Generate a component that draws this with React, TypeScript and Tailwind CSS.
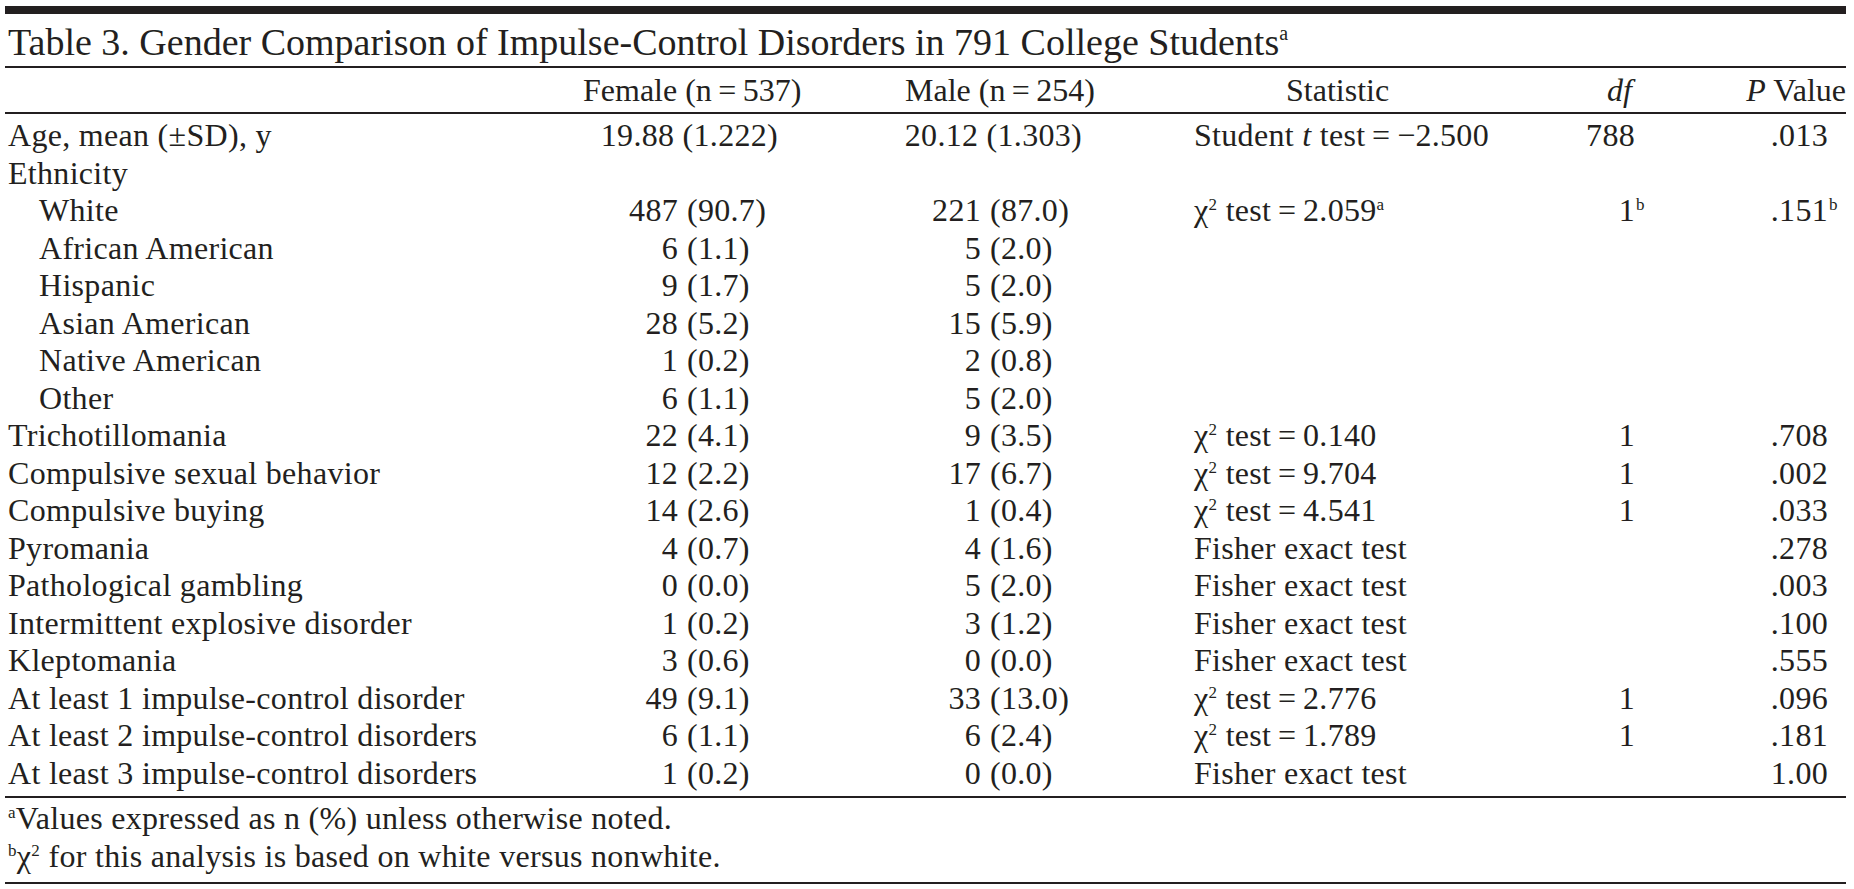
import React from 'react'

type Row = {
  label: string
  indent?: boolean
  age?: boolean
  f?: [string, string]
  m?: [string, string]
  fAge?: string
  mAge?: string
  stat?: React.ReactNode
  df?: string
  dfSup?: string
  p?: string
  pSup?: string
}

const Sup = ({ children }: { children: React.ReactNode }) => (
  <span className="relative top-[-11px] text-[17px] leading-none">{children}</span>
)

const chi = (v: string, sup?: string) => (
  <>
    χ<Sup>2</Sup> test{'\u2009'}={'\u2009'}
    {v}
    {sup && <Sup>{sup}</Sup>}
  </>
)

const fisher = 'Fisher exact test'

const rows: Row[] = [
  {
    label: 'Age, mean (\u00b1SD), y',
    age: true,
    fAge: '19.88 (1.222)',
    mAge: '20.12 (1.303)',
    stat: (
      <>
        Student <i>t</i> test{'\u2009'}={'\u2009'}−2.500
      </>
    ),
    df: '788',
    p: '.013',
  },
  { label: 'Ethnicity' },
  { label: 'White', indent: true, f: ['487', '90.7'], m: ['221', '87.0'], stat: chi('2.059', 'a'), df: '1', dfSup: 'b', p: '.151', pSup: 'b' },
  { label: 'African American', indent: true, f: ['6', '1.1'], m: ['5', '2.0'] },
  { label: 'Hispanic', indent: true, f: ['9', '1.7'], m: ['5', '2.0'] },
  { label: 'Asian American', indent: true, f: ['28', '5.2'], m: ['15', '5.9'] },
  { label: 'Native American', indent: true, f: ['1', '0.2'], m: ['2', '0.8'] },
  { label: 'Other', indent: true, f: ['6', '1.1'], m: ['5', '2.0'] },
  { label: 'Trichotillomania', f: ['22', '4.1'], m: ['9', '3.5'], stat: chi('0.140'), df: '1', p: '.708' },
  { label: 'Compulsive sexual behavior', f: ['12', '2.2'], m: ['17', '6.7'], stat: chi('9.704'), df: '1', p: '.002' },
  { label: 'Compulsive buying', f: ['14', '2.6'], m: ['1', '0.4'], stat: chi('4.541'), df: '1', p: '.033' },
  { label: 'Pyromania', f: ['4', '0.7'], m: ['4', '1.6'], stat: fisher, p: '.278' },
  { label: 'Pathological gambling', f: ['0', '0.0'], m: ['5', '2.0'], stat: fisher, p: '.003' },
  { label: 'Intermittent explosive disorder', f: ['1', '0.2'], m: ['3', '1.2'], stat: fisher, p: '.100' },
  { label: 'Kleptomania', f: ['3', '0.6'], m: ['0', '0.0'], stat: fisher, p: '.555' },
  { label: 'At least 1 impulse-control disorder', f: ['49', '9.1'], m: ['33', '13.0'], stat: chi('2.776'), df: '1', p: '.096' },
  { label: 'At least 2 impulse-control disorders', f: ['6', '1.1'], m: ['6', '2.4'], stat: chi('1.789'), df: '1', p: '.181' },
  { label: 'At least 3 impulse-control disorders', f: ['1', '0.2'], m: ['0', '0.0'], stat: fisher, p: '1.00' },
]

const grid = 'grid grid-cols-[570px_103px_182px_121px_213px_326px_115px_193px_18px]'

export default function App() {
  return (
    <div
      className="min-h-screen bg-white text-[#231f20]"
      style={{ fontFamily: '"Liberation Serif", "Times New Roman", serif' }}
    >
      <div className="ml-[5px] w-[1841px] pt-[6px]">
        {/* heavy top rule */}
        <div className="h-[8px] bg-[#231f20]" />

        {/* caption */}
        <div className="h-[52px] pt-[6px] pl-[3px] text-[38px] leading-[44px] whitespace-nowrap">
          Table 3. Gender Comparison of Impulse-Control Disorders in 791 College Students
          <span className="relative top-[-15px] text-[20px] leading-none">a</span>
        </div>
        <div className="h-[2px] bg-[#231f20]" />

        {/* column heads */}
        <div className={`${grid} h-[44px] items-center text-[32px] leading-[44px] whitespace-nowrap`}>
          <div />
          <div className="col-span-2 pl-[8px]">Female (n{'\u2009'}={'\u2009'}537)</div>
          <div className="col-span-2 pl-[45px]">Male (n{'\u2009'}={'\u2009'}254)</div>
          <div className="pl-[92px]">Statistic</div>
          <div className="pr-[3px] text-right">
            <i>df</i>
          </div>
          <div className="col-span-2 text-right">
            <i>P</i> Value
          </div>
        </div>
        <div className="h-[2px] bg-[#231f20]" />

        {/* body */}
        <div className="pt-[3px] text-[32px] leading-[37.5px] tracking-[0.3px] whitespace-nowrap">
          {rows.map((r) => (
            <div key={r.label} className={`${grid} h-[37.5px]`}>
              <div className={r.indent ? 'pl-[34px]' : 'pl-[3px]'}>{r.label}</div>
              {r.age ? (
                <>
                  <div className="col-span-2 pr-[82px] text-right">{r.fAge}</div>
                  <div className="col-span-2 pr-[112px] text-right">{r.mAge}</div>
                </>
              ) : (
                <>
                  <div className="text-right">{r.f?.[0]}</div>
                  <div className="pl-[9px]">{r.f ? `(${r.f[1]})` : ''}</div>
                  <div className="text-right">{r.m?.[0]}</div>
                  <div className="pl-[9px]">{r.m ? `(${r.m[1]})` : ''}</div>
                </>
              )}
              <div>{r.stat}</div>
              <div className="text-right">
                {r.df && (
                  <span className="relative">
                    {r.df}
                    {r.dfSup && (
                      <span className="absolute left-full top-[4px] pl-[1px] text-[17px] leading-none">{r.dfSup}</span>
                    )}
                  </span>
                )}
              </div>
              <div className="text-right">
                {r.p && (
                  <span className="relative">
                    {r.p}
                    {r.pSup && (
                      <span className="absolute left-full top-[4px] pl-[1px] text-[17px] leading-none">{r.pSup}</span>
                    )}
                  </span>
                )}
              </div>
              <div />
            </div>
          ))}
        </div>

        <div className="mt-[4px] h-[2px] bg-[#231f20]" />

        {/* footnotes */}
        <div className="pl-[3px] pt-[1px] text-[32px] leading-[38px] tracking-[0.3px] whitespace-nowrap">
          <div>
            <Sup>a</Sup>Values expressed as n (%) unless otherwise noted.
          </div>
          <div>
            <Sup>b</Sup>χ<Sup>2</Sup> for this analysis is based on white versus nonwhite.
          </div>
        </div>
        <div className="mt-[7px] h-[2px] bg-[#231f20]" />
      </div>
    </div>
  )
}
